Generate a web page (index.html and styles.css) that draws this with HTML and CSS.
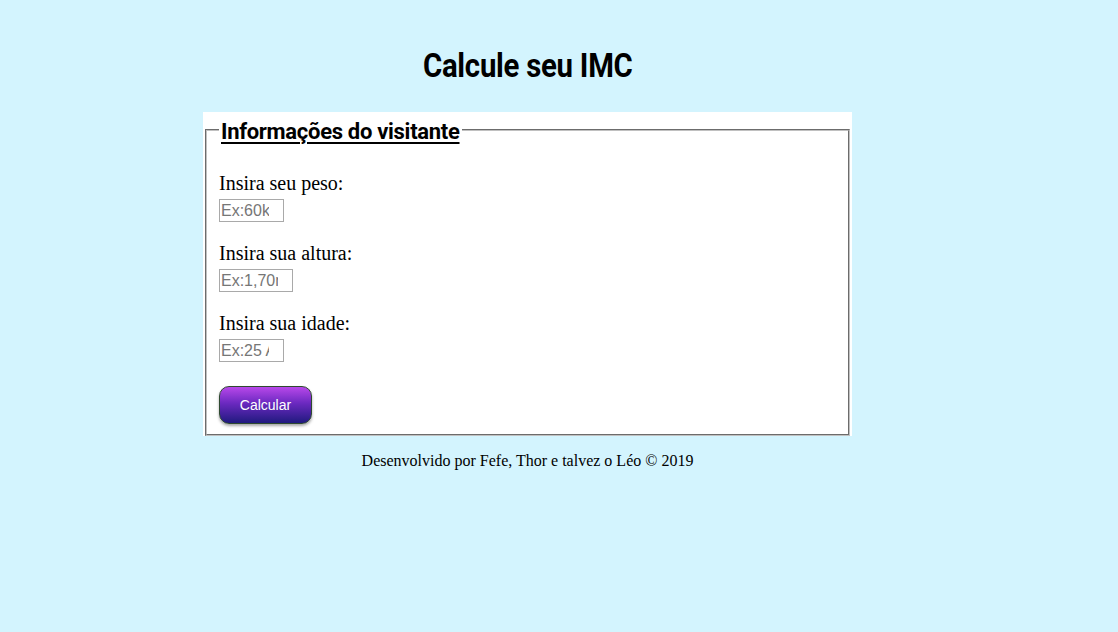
FILE: index.html
```html
<!DOCTYPE html>
<html lang="pt-BR">
<head>
<meta charset="utf-8">
<title>Calcule seu IMC</title>
<link rel="stylesheet" href="styles.css">
</head>
<body>
<div class="page">
  <h1 class="title"><span class="title-text">Calcule seu IMC</span></h1>
  <form class="card">
    <fieldset class="box">
      <legend class="legend">Informações do visitante</legend>
      <div class="fields">
        <div class="group">
          <label class="label" for="peso">Insira seu peso:</label>
          <input class="input input-sm" id="peso" type="text" inputmode="decimal" placeholder="Ex:60kg">
        </div>
        <div class="group">
          <label class="label" for="altura">Insira sua altura:</label>
          <input class="input input-md" id="altura" type="text" inputmode="decimal" placeholder="Ex:1,70m">
        </div>
        <div class="group">
          <label class="label" for="idade">Insira sua idade:</label>
          <input class="input input-sm" id="idade" type="text" inputmode="numeric" placeholder="Ex:25 Anos">
        </div>
        <div class="group">
          <button class="btn" type="button">Calcular</button>
        </div>
      </div>
    </fieldset>
  </form>
  <p class="footer">Desenvolvido por Fefe, Thor e talvez o Léo © 2019</p>
</div>
</body>
</html>
```
FILE: styles.css
```css
html, body {
  margin: 0;
  padding: 0;
}
body {
  background: #d3f4fe;
  font-family: "Liberation Serif", "Times New Roman", serif;
  color: #000;
}
.page {
  width: 1041px;
  margin-left: 7px;
}
.title {
  margin: 46px 0 26px;
  text-align: center;
  font-family: Roboto, "Liberation Sans", sans-serif;
  font-weight: bold;
  font-size: 33px;
  line-height: 40px;
}
.title-text {
  display: inline-block;
  transform: scaleX(0.89);
  letter-spacing: -0.3px;
}
.card {
  width: 649px;
  margin: 0 auto;
  background: #fff;
  padding-top: 3px;
  box-sizing: border-box;
}
.box {
  margin: 0 2px;
  padding: 0 12px 10px;
  border: 2px groove #c0c0c0;
}
.legend {
  padding: 4px 2px 0;
  font-family: Roboto, "Liberation Sans", sans-serif;
  font-weight: bold;
  font-size: 22px;
  line-height: 25px;
  letter-spacing: -0.3px;
  text-decoration: underline;
  text-decoration-thickness: 2px;
  text-underline-offset: 3px;
}
.fields {
  display: flex;
  flex-direction: column;
  align-items: flex-start;
  gap: 20px;
  padding-top: 28px;
}
.group {
  display: flex;
  flex-direction: column;
  align-items: flex-start;
  gap: 4px;
}
.label {
  font-size: 20px;
  line-height: 23px;
}
.input {
  box-sizing: border-box;
  height: 23px;
  margin: 0;
  padding: 1px 14px 1px 1px;
  border: 1px solid #a9a9a9;
  font-family: "Liberation Sans", Arial, sans-serif;
  font-size: 16px;
  background: #fff;
}
.input::placeholder {
  color: #767676;
}
.input-sm { width: 65px; }
.input-md { width: 74px; }
.btn {
  margin-top: 4px;
  width: 93px;
  height: 38px;
  border: 1px solid #2f4a30;
  border-radius: 10px;
  background: linear-gradient(to bottom, #b848ea 0%, #6b29c0 45%, #201a7e 100%);
  color: #fff;
  font-family: "Liberation Sans", Arial, sans-serif;
  font-size: 14px;
  box-shadow: 0 2px 3px rgba(0, 0, 0, 0.35);
}
.footer {
  margin: 16px 0 0;
  text-align: center;
  font-size: 16px;
  line-height: 18px;
}
```
